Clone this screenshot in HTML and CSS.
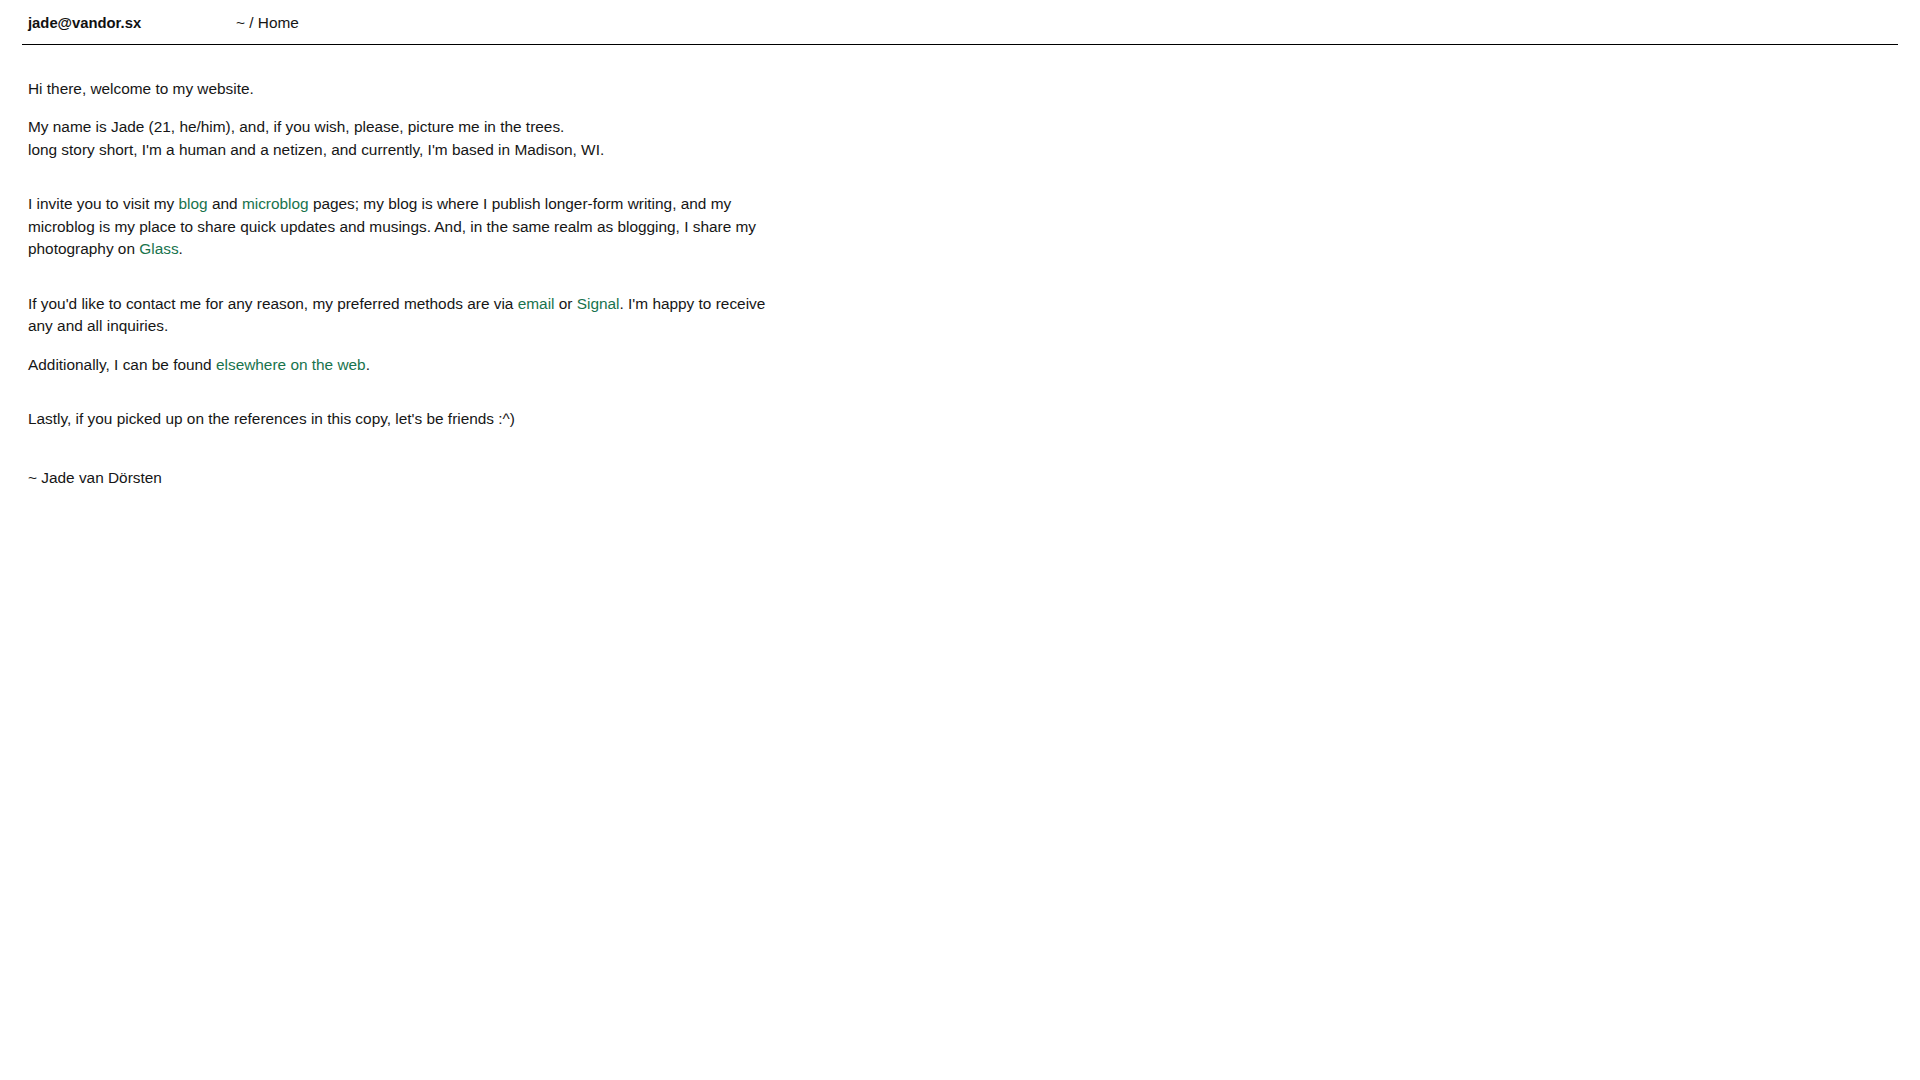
FILE: index.html
```html
<!DOCTYPE html>
<html lang="en">
<head>
<meta charset="utf-8">
<title>jade@vandor.sx</title>
<link rel="stylesheet" href="styles.css">
</head>
<body>
<header class="site-header">
  <span class="site-name">jade@vandor.sx</span>
  <nav class="crumbs">~ / Home</nav>
</header>
<main class="content">
  <p>Hi there, welcome to my website.</p>
  <p class="gap-s">My name is Jade (21, he/him), and, if you wish, please, picture me in the trees.<br>long story short, I'm a human and a netizen, and currently, I'm based in Madison, WI.</p>
  <p class="gap-l">I invite you to visit my <a href="#">blog</a> and <a href="#">microblog</a> pages; my blog is where I publish longer-form writing, and my microblog is my place to share quick updates and musings. And, in the same realm as blogging, I share my photography on <a href="#">Glass</a>.</p>
  <p class="gap-l">If you'd like to contact me for any reason, my preferred methods are via <a href="#">email</a> or <a href="#">Signal</a>. I'm happy to receive any and all inquiries.</p>
  <p class="gap-s">Additionally, I can be found <a href="#">elsewhere on the web</a>.</p>
  <p class="gap-l">Lastly, if you picked up on the references in this copy, let's be friends :^)</p>
  <p class="signature">~ Jade van Dörsten</p>
</main>
</body>
</html>
```
FILE: styles.css
```css
html, body {
  background: #ffffff;
}
body {
  margin: 0 22px;
  font-family: "Liberation Sans", Arial, sans-serif;
  font-size: 15.4px;
  line-height: 22.5px;
  color: #161616;
}
.site-header {
  display: flex;
  align-items: baseline;
  padding: 12px 6px 9px;
  border-bottom: 1px solid #000;
}
.site-name {
  width: 208px;
  font-size: 14.8px;
  font-weight: bold;
  color: #111;
}
.crumbs {
  color: #161616;
}
.content {
  padding: 33px 6px 0;
}
.content p {
  margin: 0;
  max-width: 750px;
}
.content .gap-s {
  margin-top: 16px;
}
.content .gap-l {
  margin-top: 32px;
}
.content .signature {
  margin-top: 36px;
}
a {
  color: #18734d;
  text-decoration: none;
}
```
